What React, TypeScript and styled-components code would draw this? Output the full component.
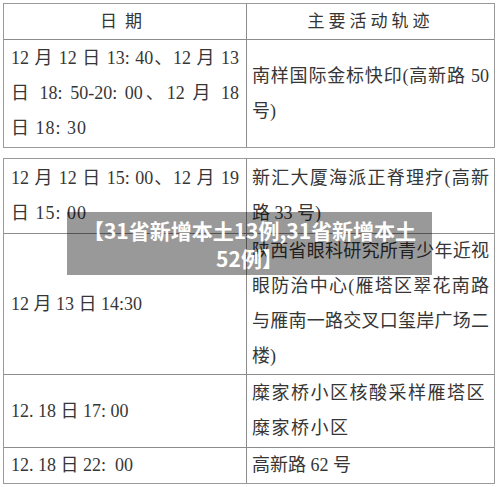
import React from "react";
import styled, { createGlobalStyle } from "styled-components";

const Global = createGlobalStyle`
  html, body { margin: 0; padding: 0; background: #fff; }
  body { width: 500px; height: 487px; overflow: hidden; }
`;

const Page = styled.div`
  position: relative;
  width: 500px;
  height: 487px;
  padding: 3px 5px 0 3px;
  box-sizing: border-box;
  display: flex;
  flex-direction: column;
  gap: 10px;
  font-family: "Liberation Serif", "Noto Sans CJK SC", serif;
  color: #363636;
  font-size: 18px;
`;

const Table = styled.div`
  border: 1.5px solid #9a9a9a;
  display: flex;
  flex-direction: column;
`;

const Row = styled.div<{ $h: number; $last?: boolean }>`
  display: grid;
  grid-template-columns: 243px 1fr;
  height: ${(p) => p.$h}px;
  border-bottom: ${(p) => (p.$last ? "none" : "1px solid #8c8c8c")};
  box-sizing: border-box;
`;

const Cell = styled.div<{ $center?: boolean; $first?: boolean }>`
  display: flex;
  flex-direction: column;
  justify-content: center;
  align-items: ${(p) => (p.$center ? "center" : "stretch")};
  padding: ${(p) => (p.$first ? "0 7px 0 7px" : "0 5px 0 5px")};
  border-right: ${(p) => (p.$first ? "1px solid #8c8c8c" : "none")};
  box-sizing: border-box;
  overflow: hidden;
`;

const Line = styled.div<{ $full?: boolean; $ls?: number }>`
  height: 35px;
  line-height: 35px;
  white-space: nowrap;
  text-align: ${(p) => (p.$full ? "justify" : "left")};
  text-align-last: ${(p) => (p.$full ? "justify" : "left")};
  letter-spacing: ${(p) => p.$ls ?? 0}px;
`;

const Head = styled.div<{ $ls: number }>`
  letter-spacing: ${(p) => p.$ls}px;
  line-height: 35px;
  font-size: 17px;
`;

const Caption = styled.div`
  position: absolute;
  left: 67px;
  top: 212px;
  width: 365px;
  height: 63px;
  background: rgba(0, 0, 0, 0.4);
  color: #fff;
  font-family: "Noto Sans CJK SC", "Noto Sans", sans-serif;
  font-weight: 700;
  font-size: 21px;
  line-height: 28px;
  text-align: center;
  padding-top: 4px;
  box-sizing: border-box;
  white-space: nowrap;
`;

type L = { t: string; full?: boolean; ls?: number };

const R = ({
  h,
  left,
  right,
  last,
}: {
  h: number;
  left: L[];
  right: L[];
  last?: boolean;
}) => (
  <Row $h={h} $last={last}>
    <Cell $first>
      {left.map((l, i) => (
        <Line key={i} $full={l.full} $ls={l.ls}>
          {l.t}
        </Line>
      ))}
    </Cell>
    <Cell>
      {right.map((l, i) => (
        <Line key={i} $full={l.full} $ls={l.ls}>
          {l.t}
        </Line>
      ))}
    </Cell>
  </Row>
);

export default function App() {
  return (
    <>
      <Global />
      <Page>
        <Table>
          <Row $h={36}>
            <Cell $first $center>
              <Head $ls={8}>日期</Head>
            </Cell>
            <Cell $center>
              <Head $ls={4}>主要活动轨迹</Head>
            </Cell>
          </Row>
          <R
            h={107}
            last
            left={[
              { t: "12 月 12 日 13: 40、12 月 13", full: true },
              { t: "日 18: 50-20: 00、12 月 18", full: true },
              { t: "日 18: 30", ls: 1 },
            ]}
            right={[
              { t: "南样国际金标快印(高新路 50", full: true },
              { t: "号)" },
            ]}
          />
        </Table>
        <Table>
          <R
            h={75}
            left={[
              { t: "12 月 12 日 15: 00、12 月 19", full: true },
              { t: "日 15: 00", ls: 1 },
            ]}
            right={[
              { t: "新汇大厦海派正脊理疗(高新", full: true },
              { t: "路 33 号)" },
            ]}
          />
          <R
            h={141}
            left={[{ t: "12 月 13 日 14:30" }]}
            right={[
              { t: "陕西省眼科研究所青少年近视", full: true },
              { t: "眼防治中心(雁塔区翠花南路", full: true },
              { t: "与雁南一路交叉口玺岸广场二", full: true },
              { t: "楼)" },
            ]}
          />
          <R
            h={73}
            left={[{ t: "12. 18 日 17: 00" }]}
            right={[
              { t: "糜家桥小区核酸采样雁塔区", ls: 1.5 },
              { t: "糜家桥小区", ls: 1.5 },
            ]}
          />
          <R
            h={35}
            last
            left={[{ t: "12. 18 日 22:\u00a0 00" }]}
            right={[{ t: "高新路 62 号" }]}
          />
        </Table>
        <Caption>
          【31省新增本土13例,31省新增本土
          <br />
          52例】
        </Caption>
      </Page>
    </>
  );
}
